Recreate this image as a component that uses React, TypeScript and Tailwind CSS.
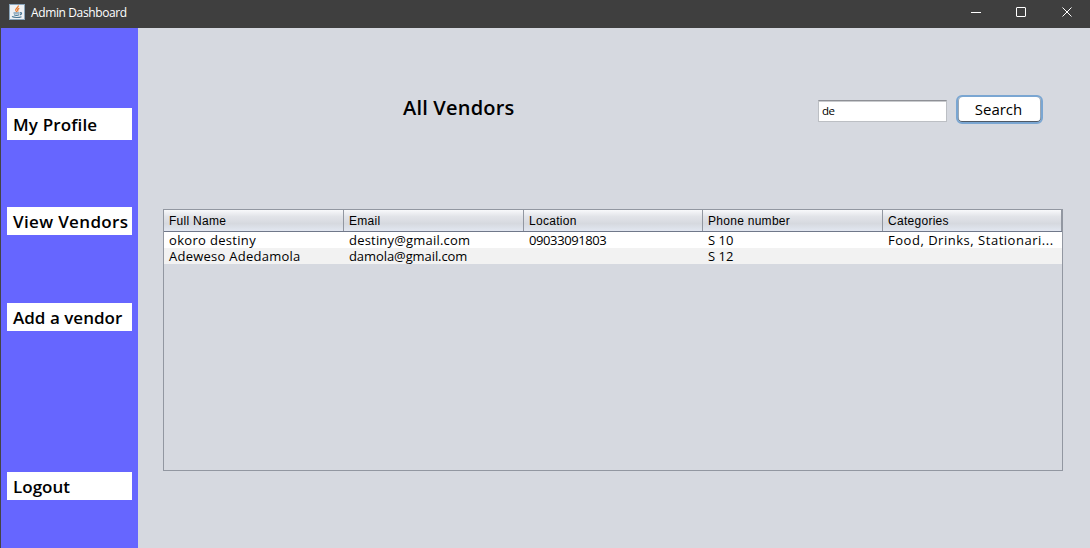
import React from "react";

const NAV = [
  { label: "My Profile", box: "mt-[80px] h-8", text: "tracking-[0.15px]" },
  { label: "View Vendors", box: "mt-[67px] h-7", text: "tracking-[0.35px]" },
  { label: "Add a vendor", box: "mt-[68px] h-7", text: "tracking-[0.02px]" },
  { label: "Logout", box: "mt-[141px] h-7", text: "tracking-[0.02px]" },
];

const COLUMNS = ["Full Name", "Email", "Location", "Phone number", "Categories"];
const ROWS = [
  [
    { v: "okoro destiny", t: "tracking-[0.32px]" },
    { v: "destiny@gmail.com", t: "tracking-[0.2px]" },
    { v: "09033091803", t: "tracking-[-0.4px]" },
    { v: "S 10", t: "" },
    { v: "Food, Drinks, Stationari...", t: "tracking-[0.52px]" },
  ],
  [
    { v: "Adeweso Adedamola", t: "tracking-[0.25px]" },
    { v: "damola@gmail.com", t: "tracking-[-0.08px]" },
    { v: "", t: "" },
    { v: "S 12", t: "" },
    { v: "", t: "" },
  ],
];
const GRID = "grid grid-cols-[180px_180px_179px_180px_179px]";

function JavaIcon() {
  return (
    <svg width="16" height="16" viewBox="0 0 16 16" fill="none">
      <rect x="0.5" y="0.5" width="15" height="15" fill="#eef1f4" stroke="#8ba6bb" />
      <path d="M9.3 1.5C9.8 3.5 5.8 4.5 6.8 6.5L7.8 8M10.3 4.3C8.3 5.3 8.3 6 9.1 7.5" stroke="#e87a2c" strokeWidth="1.3" />
      <path d="M4.5 9H10.5M5 10.7C6.5 11.4 8.5 11.4 10 10.7M3 12.6C5 13.8 10 13.8 12.5 12.7M11 8.8C13.3 8.2 13 10.2 10.8 10.8" stroke="#4b7895" strokeWidth="1.2" />
    </svg>
  );
}

export default function App() {
  return (
    <div className="flex h-[548px] w-[1090px] flex-col overflow-hidden bg-[#d6d9e0] text-black">
      <header className="flex h-7 shrink-0 items-start bg-[#3f3f3f]">
        <div className="pl-[9px] pt-[4px]"><JavaIcon /></div>
        <span className="pl-[6px] pt-[5px] font-['Open_Sans','Noto_Sans',sans-serif] text-[12px] leading-4 tracking-[-0.38px] text-white">Admin Dashboard</span>
        <svg className="ml-auto mr-[17px] mt-[6px]" width="103" height="14" viewBox="0 0 103 14" fill="none" stroke="#fff">
          <path d="M1 6.5H11" />
          <rect x="46.5" y="1.5" width="9" height="9" rx="0.5" />
          <path d="M92.5 1.5L101.5 10.5M101.5 1.5L92.5 10.5" />
        </svg>
      </header>
      <div className="flex min-h-0 flex-1">
        <nav className="w-[138px] shrink-0 border-l border-[#444] bg-[#6666ff] pl-[6px]">
          {NAV.map((n) => (
            <div key={n.label} className={`flex w-[125px] items-center bg-white pl-[6px] pt-[2px] ${n.box}`}>
              <span className={`whitespace-nowrap font-['Open_Sans','Noto_Sans',sans-serif] text-[17px] font-semibold leading-5 ${n.text}`}>{n.label}</span>
            </div>
          ))}
        </nav>
        <main className="flex flex-1 flex-col pl-[25px]">
          <div className="flex h-[181px] items-start">
            <h1 className="w-[654px] pl-[240px] pt-[67px] font-['Open_Sans','Noto_Sans',sans-serif] text-[20px] font-semibold leading-[26px] tracking-[0.2px]">All Vendors</h1>
            <div className="pl-[1px] pt-[72px]">
              <div className="flex h-[22px] w-[129px] items-center border border-[#bcbfc4] border-t-[#8e9096] bg-white pl-[3px] shadow-[inset_0_1px_0_#c8cacd]">
                <span className="font-['Open_Sans','Noto_Sans',sans-serif] text-[11.5px] leading-4 tracking-[-0.5px]">de</span>
              </div>
            </div>
            <div className="pl-[9px] pt-[67px]">
              <button className="flex h-[29px] w-[87px] items-center justify-center rounded-[6px] border-2 border-[#7aa6d2] bg-white pr-[2px] font-['Open_Sans','Noto_Sans',sans-serif] text-[15px] shadow-[inset_0_-1px_0_#4f5a66,inset_1px_0_0_#9aa7b5,inset_-1px_0_0_#9aa7b5]">
                Search
              </button>
            </div>
          </div>
          <section className="h-[262px] w-[900px] border border-[#9297a1]">
            <div className={`${GRID} h-[22px] border-b border-[#70788a] bg-[linear-gradient(#f8f9fb_0%,#e2e4e9_30%,#d6d9df_65%,#e2e7f1_100%)]`}>
              {COLUMNS.map((c) => (
                <div key={c} className="whitespace-nowrap border-r border-[#9297a1] pl-[5px] pt-[3px] font-['Liberation_Sans',Arial,sans-serif] text-[12px] leading-4 tracking-[0.28px]">{c}</div>
              ))}
            </div>
            {ROWS.map((r, i) => (
              <div key={i} className={`${GRID} h-4 ${i ? "bg-[#f2f2f2]" : "bg-white"}`}>
                {r.map((c, j) => (
                  <div key={j} className={`whitespace-nowrap pl-[5px] font-['Open_Sans','Noto_Sans',sans-serif] text-[13px] leading-4 ${c.t}`}>{c.v}</div>
                ))}
              </div>
            ))}
          </section>
        </main>
      </div>
    </div>
  );
}
